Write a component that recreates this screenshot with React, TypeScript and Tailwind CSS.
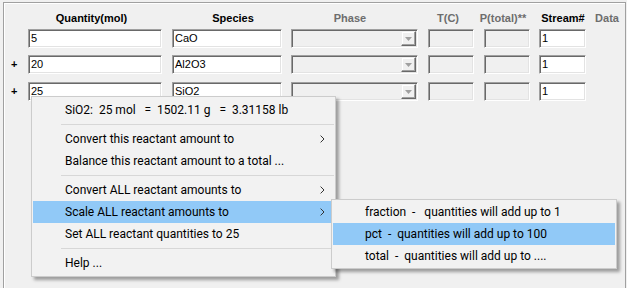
const sunken =
  "h-[19px] border border-t-[#a0a0a0] border-l-[#a0a0a0] border-r-white border-b-white shadow-[inset_1px_1px_0_#696969,inset_-1px_-1px_0_#e3e3e3]";

function TextBox({ w, value, disabled }: { w: string; value?: string; disabled?: boolean }) {
  return (
    <div
      className={`${sunken} ${w} ${disabled ? "bg-[#f0f0f0]" : "bg-white"} flex items-center pl-[2px] text-[11px] leading-none text-black`}
    >
      {value}
    </div>
  );
}

function Combo() {
  return (
    <div className={`${sunken} w-[127px] bg-[#f0f0f0] flex justify-end p-[1px]`}>
      <div className="w-[15px] h-full border border-t-[#f0f0f0] border-l-[#f0f0f0] border-r-[#696969] border-b-[#696969] shadow-[inset_-1px_-1px_0_#a0a0a0,inset_1px_1px_0_#ffffff] bg-[#f0f0f0] flex items-center justify-center">
        <svg width="7" height="4" viewBox="0 0 7 4">
          <polygon points="0,0 7,0 3.5,4" fill="#a0a0a0" />
        </svg>
      </div>
    </div>
  );
}

function Row({ plus, qty, species, className }: { plus?: boolean; qty: string; species: string; className: string }) {
  return (
    <div className={`flex items-center ${className}`}>
      <div className="w-[24px] pl-[7px] text-[11px] font-bold leading-none">{plus ? "+" : ""}</div>
      <TextBox w="w-[134px]" value={qty} />
      <div className="ml-[10px]">
        <TextBox w="w-[110px]" value={species} />
      </div>
      <div className="ml-[9px]">
        <Combo />
      </div>
      <div className="ml-[10px]">
        <TextBox w="w-[46px]" disabled />
      </div>
      <div className="ml-[10px]">
        <TextBox w="w-[46px]" disabled />
      </div>
      <div className="ml-[9px]">
        <TextBox w="w-[47px]" value="1" />
      </div>
    </div>
  );
}

function Chevron() {
  return (
    <svg width="5" height="8" viewBox="0 0 5 8">
      <polyline points="0.6,0.6 4,4 0.6,7.4" fill="none" stroke="#333333" strokeWidth="1" />
    </svg>
  );
}

function MenuItem({ label, arrow, active }: { label: string; arrow?: boolean; active?: boolean }) {
  return (
    <div className={`h-[22px] mx-[1px] flex items-center pl-[32px] pr-[9px] ${active ? "bg-[#91c9f7]" : ""}`}>
      <span className="flex-1 whitespace-pre">{label}</span>
      {arrow && <Chevron />}
    </div>
  );
}

function Sep() {
  return (
    <div className="h-[7px] flex items-center pl-[29px] pr-[1px]">
      <div className="h-px w-full bg-[#d7d7d7]" />
    </div>
  );
}

const menuBox =
  "absolute bg-[#f2f2f2] border border-[#cccccc] shadow-[3px_3px_3px_rgba(0,0,0,0.35)] text-[12px] text-black font-['Roboto',sans-serif]";

export default function App() {
  return (
    <div className="relative w-[627px] h-[288px] overflow-hidden bg-[#f0f0f0] pt-[2px] pl-[3px] pr-[1px] font-['Liberation_Sans',Arial,sans-serif] text-black">
      <div className="h-[300px] border-l border-t border-r border-[#a0a0a0] shadow-[inset_1px_1px_0_#ffffff]">
        {/* headers */}
        <div className="flex mt-[9px] h-[13px] text-[11px] font-bold leading-[13px] whitespace-nowrap">
          <div className="ml-[47px] w-[81px] text-center">Quantity(mol)</div>
          <div className="ml-[71px] w-[60px] text-center">Species</div>
          <div className="ml-[57px] w-[60px] text-center text-[#6d6d6d]">Phase</div>
          <div className="ml-[48px] w-[40px] text-center text-[#6d6d6d]">T(C)</div>
          <div className="ml-[5px] w-[60px] text-center text-[#6d6d6d]">P(total)**</div>
          <div className="ml-[3px] w-[54px] text-center">Stream#</div>
          <div className="ml-[2px] w-[30px] text-center text-[#6d6d6d]">Data</div>
        </div>

        <Row qty="5" species="CaO" className="mt-[4px]" />
        <Row plus qty="20" species="Al2O3" className="mt-[7px]" />
        <Row plus qty="25" species="SiO2" className="mt-[8px]" />
      </div>

      {/* context menu */}
      <div className={`${menuBox} left-[31px] top-[96px] w-[305px] pt-[2px] pb-[2px]`}>
        <MenuItem label="SiO2:  25 mol   =  1502.11 g   =  3.31158 lb" />
        <Sep />
        <MenuItem label="Convert this reactant amount to" arrow />
        <MenuItem label="Balance this reactant amount to a total ..." />
        <Sep />
        <MenuItem label="Convert ALL reactant amounts to" arrow />
        <MenuItem label="Scale ALL reactant amounts to" arrow active />
        <MenuItem label="Set ALL reactant quantities to 25" />
        <Sep />
        <MenuItem label="Help ..." />
      </div>

      {/* submenu */}
      <div className={`${menuBox} left-[331px] top-[199px] w-[286px] pt-[1px] pb-[1px]`}>
        <MenuItem label="fraction  -   quantities will add up to 1" />
        <MenuItem label="pct  -  quantities will add up to 100" active />
        <MenuItem label="total  -  quantities will add up to ...." />
      </div>
    </div>
  );
}
